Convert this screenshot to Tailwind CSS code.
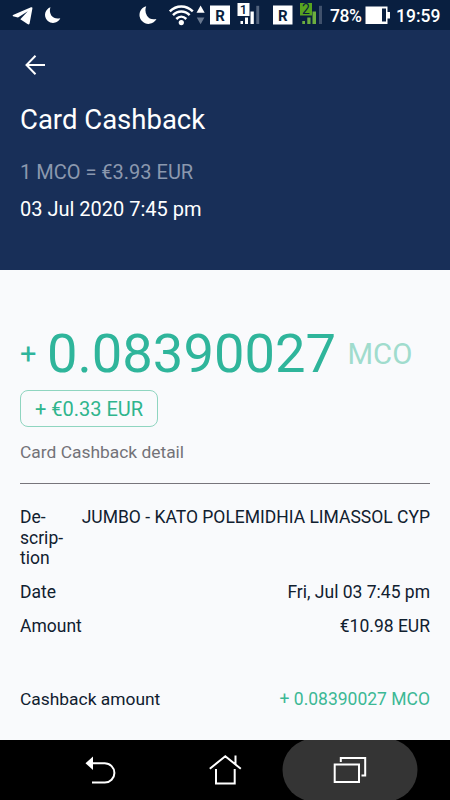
<!DOCTYPE html>
<html lang="en">
<head>
<meta charset="utf-8">
<meta name="viewport" content="width=device-width, initial-scale=1">
<title>Card Cashback</title>
<script src="https://cdn.jsdelivr.net/npm/@tailwindcss/browser@4"></script>
</head>
<body class="w-[450px] h-[800px] overflow-hidden flex flex-col bg-[#f9fafc] font-[Roboto,sans-serif] text-[#10202f]">
  <div class="h-[30px] shrink-0 bg-[#091f40] text-white flex items-center">
    <svg class="w-[330px] h-[30px] shrink-0" viewBox="0 0 330 30" fill="#fff">
      <path d="M13 15 31 7.300Q32.700 6.800 32.400 8.600L29.600 23.400Q29 25 27.500 24L20.300 19.300 27.800 11.300 18 17.500 13 16.300Q12.200 15.700 13 15Z"/>
      <path d="M50.500 7.300A8 8 0 1 0 60.300 18.200Q54.500 19.500 51.300 15.500 48.800 11.500 50.500 7.300Z"/>
      <path d="M146.200 6.200A9 9 0 1 0 156.500 19Q150 20.500 147 15.800 144.300 11 146.200 6.200Z"/>
      <g fill="none" stroke="#fff" stroke-width="2.500">
        <path d="M169.800 11.300C176.500 4.800 186.100 4.800 192.800 11.300M173 15.200C177.800 10.300 184.800 10.300 189.600 15.200M176.300 19C179.300 16 183.300 16 186.300 19"/>
      </g>
      <circle cx="181.300" cy="22.600" r="2.600"/>
      <path d="M196.500 12.800 200.600 5.500 204.700 12.800Z"/>
      <path d="M196.800 17.500H204.400L200.600 24.300Z" fill="#68788f"/>
      <rect x="210" y="5.500" width="20" height="19"/>
      <text x="220" y="20.500" text-anchor="middle" font-size="15" font-weight="700" fill="#091f40">R</text>
      <rect x="237.500" y="3" width="12" height="13"/>
      <text x="243.500" y="14.200" text-anchor="middle" font-size="13" font-weight="500" fill="#091f40">1</text>
      <path d="M240.500 21H243V24H240.500ZM245 17.500H248V24H245ZM250.500 11.500H253.800V24H250.500Z"/>
      <path d="M256.300 5.800H259.200V24H256.300Z" fill="#53647e"/>
      <rect x="273" y="5.500" width="19.500" height="19"/>
      <text x="282.700" y="20.500" text-anchor="middle" font-size="15" font-weight="700" fill="#091f40">R</text>
      <rect x="300" y="3" width="12" height="12.500" fill="#58a51f"/>
      <text x="306" y="14" text-anchor="middle" font-size="14" fill="#091f40">2</text>
      <path d="M302.300 21H305V24H302.300ZM307.300 17.500H310.500V24H307.300ZM312.500 11.500H316V24H312.500Z" fill="#6cae3f"/>
      <path d="M319 5.800H322V24H319Z" fill="#40516c"/>
    </svg>
    <span class="w-[35px] shrink-0 text-[17.5px] font-medium leading-[30px] tracking-[-0.4px] whitespace-nowrap pt-px">78%</span>
    <svg class="w-[26px] h-[30px] shrink-0" viewBox="365 0 26 30"><path d="M365.500 6.500H387.500V12H390V18.500H387.500V24H365.500Z" fill="#fff"/><path d="M382 8.500H386V21.500H382Z" fill="#091f40"/></svg>
    <span class="ml-[5px] text-[17.5px] font-medium leading-[30px] whitespace-nowrap pt-px">19:59</span>
  </div>

  <header class="h-[240px] shrink-0 bg-[#182f58] text-white px-5 pt-[22px] flex flex-col items-start">
    <svg class="w-[30px] h-[26px]" viewBox="20 52 30 26" fill="none" stroke="#fff" stroke-width="2"><path d="M45 65H26.800M35.500 55.800 26.500 65 35.500 74.200"/></svg>
    <h1 class="mt-[26px] text-[27.5px] leading-8 whitespace-nowrap">Card Cashback</h1>
    <p class="mt-[24px] text-[20px] leading-6 text-[#8b98ae] whitespace-nowrap">1 MCO = €3.93 EUR</p>
    <p class="mt-[13px] text-[20px] leading-6 whitespace-nowrap">03 Jul 2020 7:45 pm</p>
  </header>

  <main class="h-[470px] shrink-0 px-5 pt-14 flex flex-col items-start">
    <div class="h-14 flex items-center text-[#2fb59b] whitespace-nowrap">
      <span class="w-[27px] text-[29px] leading-[34px]">+</span>
      <span class="w-[300.5px] text-[54.3px] leading-14">0.08390027</span>
      <span class="text-[29.3px] leading-[34px] text-[#a0dccd]">MCO</span>
    </div>
    <div class="mt-[8px] w-[138px] h-[37px] rounded-[8px] border border-[#8fd5c0] flex items-center justify-center text-[20px] leading-6 text-[#2fb58d] whitespace-nowrap pt-px">+ €0.33 EUR</div>
    <p class="mt-[15px] text-[17.4px] leading-[21px] text-[#737278] whitespace-nowrap">Card Cashback detail</p>
    <div class="mt-5 h-px w-full bg-[#77757b]"></div>
    <dl class="w-full mt-[23px] text-[17.500px] leading-[20.7px] whitespace-nowrap">
      <div class="flex justify-between"><dt>De-<br>scrip-<br>tion</dt><dd>JUMBO - KATO POLEMIDHIA LIMASSOL CYP</dd></div>
      <div class="flex justify-between mt-[13px]"><dt>Date</dt><dd>Fri, Jul 03 7:45 pm</dd></div>
      <div class="flex justify-between mt-[13px]"><dt>Amount</dt><dd>€10.98 EUR</dd></div>
      <div class="flex justify-between mt-[52px]"><dt class="text-[17.4px]">Cashback amount</dt><dd class="text-[#3cb895]">+ 0.08390027 MCO</dd></div>
    </dl>
  </main>

  <nav class="h-[60px] shrink-0 bg-black flex items-center">
    <svg class="w-[450px] h-[60px]" viewBox="0 740 450 60" fill="none" stroke="#fff" stroke-width="2">
      <rect x="282.500" y="738.500" width="135" height="63" rx="31.500" fill="#343434" stroke="none"/>
      <path d="M92 763.300H104.800A9.600 9.600 0 0 1 104.800 782.500H92"/>
      <path d="M85.500 763.300 93 756.500V770Z" fill="#fff" stroke="none"/>
      <path d="M209.800 768.700 225.300 756.300 240.800 768.700M235.500 764V755.500M216 769V783.500H234.700V769"/>
      <path d="M334.700 764.500H359V782H334.700ZM340.800 762V758H365.200V775.500H361.500"/>
    </svg>
  </nav>
</body>
</html>
